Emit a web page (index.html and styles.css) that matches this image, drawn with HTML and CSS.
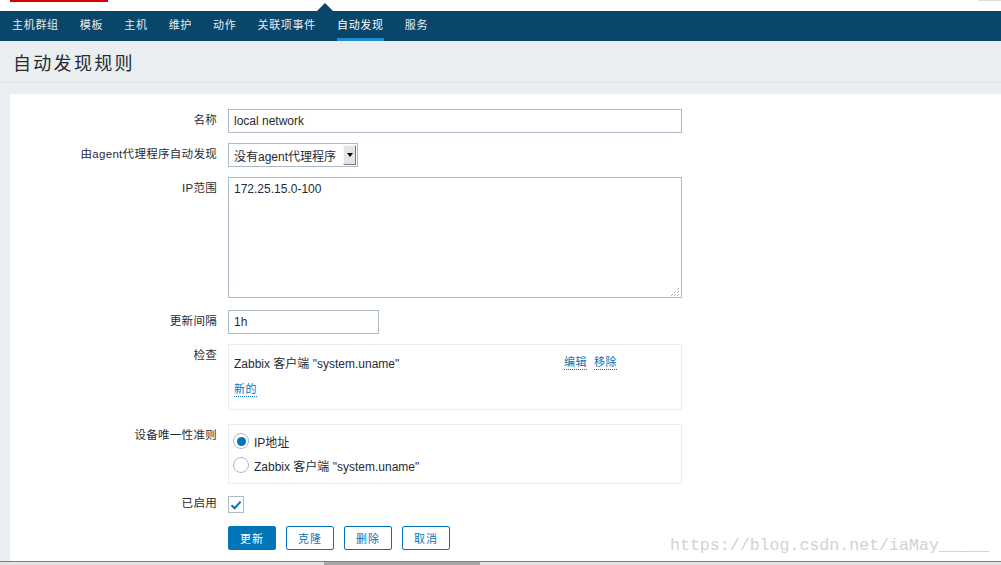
FILE: index.html
```html
<!DOCTYPE html>
<html lang="zh-CN">
  <head>
    <meta charset="UTF-8" />
    <meta name="viewport" content="width=device-width, initial-scale=1.0" />
    <title>自动发现规则</title>
    <link rel="stylesheet" href="styles.css">
  </head>
  <body>
    <div class="topbar">
      <span class="brand-line"></span>
      <span class="corner"></span>
    </div>
    <nav class="nav">
      <span class="nav-notch"></span>
      <a href="#">主机群组</a>
      <a href="#">模板</a>
      <a href="#">主机</a>
      <a href="#">维护</a>
      <a href="#">动作</a>
      <a href="#">关联项事件</a>
      <a href="#" class="active">自动发现</a>
      <a href="#">服务</a>
    </nav>
    <header class="page-title">
      <h1>自动发现规则</h1>
    </header>
    <main class="content">
      <div class="panel">
        <form class="form">
          <div class="row">
            <label for="name">名称</label>
            <input type="text" id="name" class="text wide" value="local network" />
          </div>
          <div class="row">
            <label>由agent代理程序自动发现</label>
            <div class="select">
              <span>没有agent代理程序</span>
              <span class="drop"><i></i></span>
            </div>
          </div>
          <div class="row">
            <label for="iprange">IP范围</label>
            <div class="ta-wrap">
              <textarea id="iprange">172.25.15.0-100</textarea>
              <svg class="grip" width="9" height="9" viewBox="0 0 9 9">
                <g fill="#a9b4bd">
                  <rect x="7" y="1" width="1" height="1" /><rect x="7" y="4" width="1" height="1" /><rect x="7" y="7" width="1" height="1" />
                  <rect x="4" y="4" width="1" height="1" /><rect x="4" y="7" width="1" height="1" />
                  <rect x="1" y="7" width="1" height="1" />
                  <rect x="6" y="2" width="1" height="1" /><rect x="6" y="5" width="1" height="1" /><rect x="3" y="5" width="1" height="1" />
                  <rect x="6" y="8" width="1" height="1" /><rect x="3" y="8" width="1" height="1" /><rect x="0" y="8" width="1" height="1" />
                </g>
              </svg>
            </div>
          </div>
          <div class="row gap-12">
            <label for="delay">更新间隔</label>
            <input type="text" id="delay" class="text short" value="1h" />
          </div>
          <div class="row">
            <label>检查</label>
            <div class="box checks">
              <div class="check-row">
                <span class="check-name">Zabbix 客户端 "system.uname"</span>
                <a href="#" class="link">编辑</a>
                <a href="#" class="link">移除</a>
              </div>
              <div class="check-row">
                <a href="#" class="link">新的</a>
              </div>
            </div>
          </div>
          <div class="row gap-14">
            <label>设备唯一性准则</label>
            <div class="box radios">
              <div class="radio-row"><span class="radio on"></span>IP地址</div>
              <div class="radio-row"><span class="radio"></span>Zabbix 客户端 "system.uname"</div>
            </div>
          </div>
          <div class="row gap-8">
            <label>已启用</label>
            <span class="checkbox">
              <svg width="14" height="14" viewBox="0 0 14 14">
                <path d="M2.5 7.2 L5.6 10.2 L11.6 3.6" fill="none" stroke="#0275b8" stroke-width="2" />
              </svg>
            </span>
          </div>
          <div class="row gap-12">
            <label></label>
            <div class="buttons">
              <button type="button" class="btn primary">更新</button>
              <button type="button" class="btn">克隆</button>
              <button type="button" class="btn">删除</button>
              <button type="button" class="btn">取消</button>
            </div>
          </div>
        </form>
        <div class="watermark">https://blog.csdn.net/iaMay_____</div>
      </div>
    </main>
    <div class="hscroll"><span class="thumb"></span></div>
  </body>
</html>
```

FILE: styles.css
```css
body {
  margin: 0;
  padding: 0;
  height: 565px;
  overflow: hidden;
  display: flex;
  flex-direction: column;
  font-family: "Liberation Sans", "Noto Sans CJK SC", sans-serif;
  font-size: 12px;
  color: #1f2c33;
  background-color: #ebeef0;
}

.topbar {
  height: 11px;
  background-color: #fff;
  display: flex;
  justify-content: space-between;
  align-items: flex-start;
}

.brand-line {
  width: 98px;
  height: 2px;
  margin-left: 10px;
  background-color: #d40000;
}

.corner {
  width: 23px;
  height: 1px;
  background-color: #dcdcdc;
}

.nav {
  position: relative;
  height: 30px;
  background-color: #0a466a;
  display: flex;
  gap: 21px;
  padding-left: 12px;
}

.nav-notch {
  position: absolute;
  left: 317px;
  top: -8px;
  width: 0;
  height: 0;
  border-left: 8px solid transparent;
  border-right: 8px solid transparent;
  border-bottom: 8px solid #0a466a;
}

.nav a {
  font-family: "Noto Sans CJK SC", sans-serif;
  font-size: 11px;
  letter-spacing: 0.7px;
  line-height: 27px;
  color: #e6edf2;
  text-decoration: none;
  border-bottom: 3px solid transparent;
}

.nav a.active {
  color: #fff;
  border-bottom-color: #1f8bd0;
}

.page-title {
  height: 41px;
  border-bottom: 1px solid #dde2e6;
  background-color: #ebeef0;
}

.page-title h1 {
  margin: 0;
  padding: 2px 0 0 13px;
  font-family: "Noto Sans CJK SC", sans-serif;
  font-size: 18px;
  font-weight: normal;
  letter-spacing: 2.3px;
  line-height: 39px;
  color: #1f2c33;
}

.content {
  flex: 1;
  display: flex;
  padding-top: 11px;
  min-height: 0;
}

.panel {
  position: relative;
  flex: 1;
  margin-left: 10px;
  background-color: #fff;
  padding-top: 15px;
}

.form {
  display: flex;
  flex-direction: column;
}

.row {
  display: flex;
  align-items: flex-start;
  margin-top: 10px;
}

.row:first-child {
  margin-top: 0;
}

.row.gap-8 {
  margin-top: 8px;
}

.row.gap-12 {
  margin-top: 12px;
}

.row.gap-14 {
  margin-top: 14px;
}

.row label {
  width: 207px;
  flex: none;
  margin-right: 11px;
  text-align: right;
  line-height: 22px;
  font-size: 11.5px;
  letter-spacing: 0.3px;
  white-space: nowrap;
}

input.text,
textarea {
  box-sizing: border-box;
  height: 24px;
  border: 1px solid #acbbc7;
  padding: 0 5px;
  font-family: "Liberation Sans", "Noto Sans CJK SC", sans-serif;
  font-size: 12px;
  color: #1f2c33;
  background-color: #fff;
  outline: none;
}

input.wide {
  width: 454px;
}

input.short {
  width: 151px;
}

.select {
  box-sizing: border-box;
  width: 130px;
  height: 24px;
  border: 1px solid #acbbc7;
  display: flex;
  align-items: center;
  justify-content: space-between;
  padding: 0 0 0 5px;
  font-family: "Liberation Sans", "Noto Sans CJK SC", sans-serif;
}

.drop {
  width: 13px;
  height: 20px;
  margin-right: 1px;
  box-sizing: border-box;
  background-color: #e4e4e4;
  border: 1px solid;
  border-color: #fafafa #7a7a7a #7a7a7a #fafafa;
  display: flex;
  align-items: center;
  justify-content: center;
}

.drop i {
  width: 0;
  height: 0;
  border-left: 3px solid transparent;
  border-right: 3px solid transparent;
  border-top: 4px solid #000;
}

.ta-wrap {
  position: relative;
  width: 454px;
  height: 121px;
}

textarea {
  width: 454px;
  height: 121px;
  padding: 4px 5px;
  line-height: 14px;
  resize: none;
  display: block;
}

.grip {
  position: absolute;
  right: 2px;
  bottom: 2px;
}

.box {
  box-sizing: border-box;
  width: 454px;
  border: 1px solid #ebeef0;
}

.checks {
  padding: 5px 5px 8px;
  display: flex;
  flex-direction: column;
  gap: 3px;
}

.check-row {
  display: flex;
  align-items: center;
  height: 24px;
}

.check-name {
  width: 330px;
}

.link {
  font-family: "Noto Sans CJK SC", sans-serif;
  font-size: 11px;
  letter-spacing: 0.5px;
  line-height: 15px;
  color: #0275b8;
  text-decoration: none;
  border-bottom: 1px dotted #0275b8;
  margin-right: 7px;
}

.radios {
  padding: 4px 4px 5px;
  height: 60px;
}

.radio-row {
  display: flex;
  align-items: center;
  height: 24px;
}

.radio {
  box-sizing: border-box;
  width: 16px;
  height: 16px;
  border: 1px solid #acbbc7;
  border-radius: 50%;
  margin-right: 5px;
  display: flex;
  align-items: center;
  justify-content: center;
}

.radio.on::after {
  content: "";
  width: 9px;
  height: 9px;
  border-radius: 50%;
  background-color: #0275b8;
}

.checkbox {
  box-sizing: border-box;
  width: 16px;
  height: 17px;
  margin-top: 4px;
  border: 1px solid #acbbc7;
  display: flex;
  align-items: center;
  justify-content: center;
}

.buttons {
  display: flex;
  gap: 10px;
}

.btn {
  box-sizing: border-box;
  width: 48px;
  height: 24px;
  border: 1px solid #0275b8;
  border-radius: 2px;
  background-color: #fff;
  color: #0275b8;
  font-family: "Noto Sans CJK SC", sans-serif;
  font-size: 11px;
  letter-spacing: 1px;
  padding: 0;
  cursor: pointer;
}

.btn.primary {
  background-color: #0275b8;
  color: #fff;
}

.watermark {
  position: absolute;
  left: 660px;
  top: 442px;
  font-family: "Liberation Mono", monospace;
  font-size: 16.6px;
  color: #d2d2d2;
}

.hscroll {
  height: 3px;
  border-top: 1px solid #7e7e7e;
  background-color: #e4e4e4;
  position: relative;
}

.hscroll .thumb {
  position: absolute;
  left: 324px;
  top: 0;
  width: 156px;
  height: 3px;
  background-color: #a8a8a8;
}
```
